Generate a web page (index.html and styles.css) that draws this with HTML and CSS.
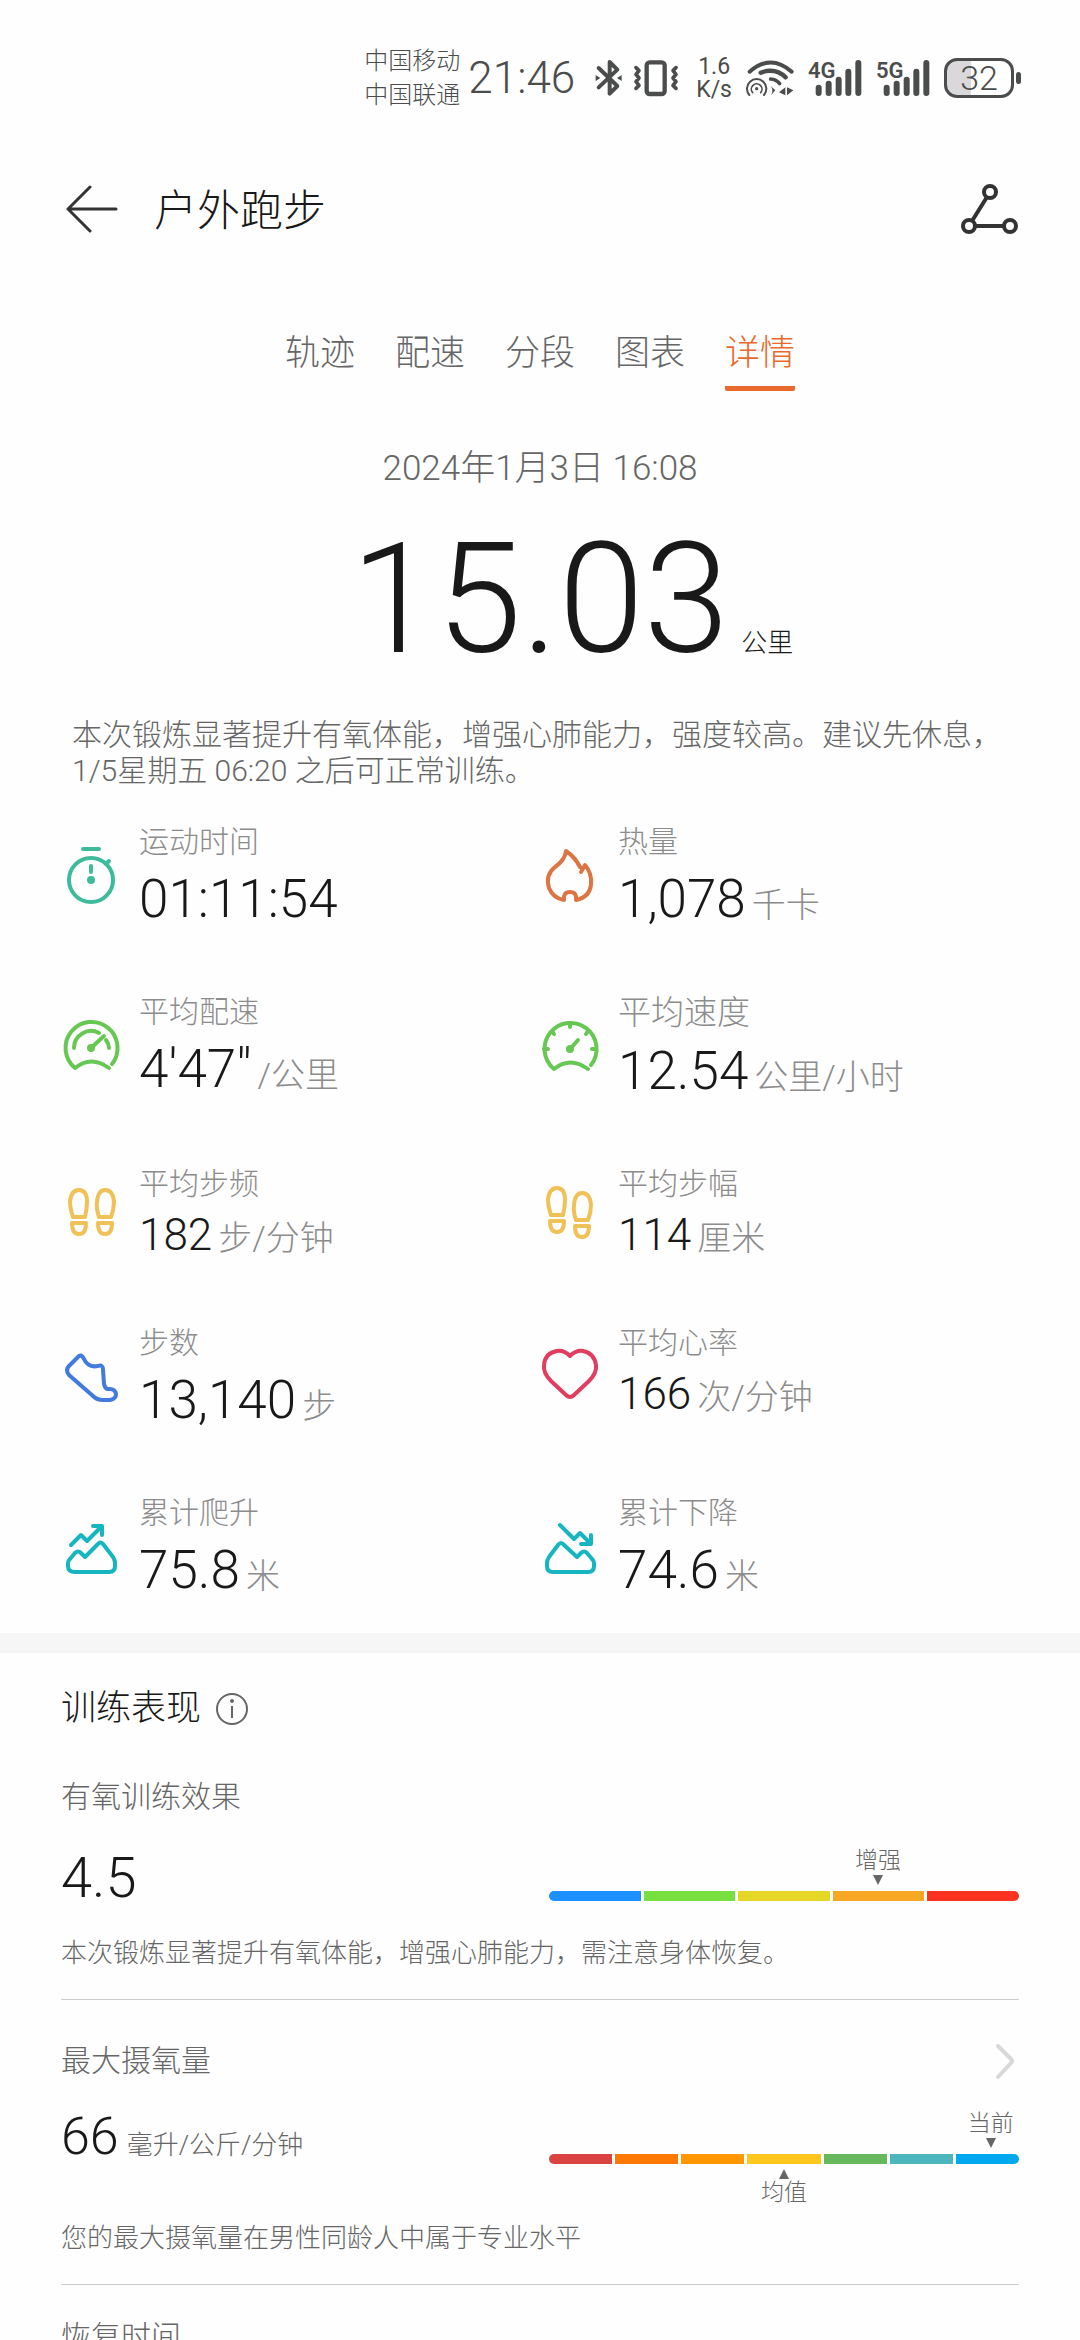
FILE: index.html
```html
<!DOCTYPE html>
<html lang="zh-CN">
<head>
  <meta charset="UTF-8" />
  <meta name="viewport" content="width=device-width, initial-scale=1.0"/>
  <title>户外跑步</title>
  <link rel="stylesheet" href="styles.css">
</head>
<body>
<div class="page">

  <!-- Status bar -->
  <div class="status-bar">
    <div class="carriers"><span>中国移动</span><span>中国联通</span></div>
    <div class="clock">21:46</div>
    <svg class="bluetooth" width="27" height="38" viewBox="753 87 81 114" fill="none" stroke="#4b4d4c" stroke-width="12" stroke-linejoin="round" stroke-linecap="round">
      <path d="M764 114 L820 168 L797 191 V96 L820 119 L764 172"/>
      <path d="M755 135 l14 9 -14 9z M833 135 l-14 9 14 9z" fill="#4b4d4c" stroke="none"/>
    </svg>
    <svg width="46" height="38" viewBox="869 87 138 114" fill="none" stroke="#4b4d4c" stroke-width="13" stroke-linejoin="round" stroke-linecap="round">
      <rect x="910" y="97" width="54" height="95" rx="9"/>
      <path d="M878 113 l9 9 -9 11 9 11 -9 11 9 11 -9 9 M998 113 l-9 9 9 11 -9 11 9 11 -9 11 9 9" stroke-width="11"/>
    </svg>
    <div class="net-speed"><span>1.6</span><span>K/s</span></div>
    <svg class="wifi" width="48" height="38" viewBox="164 87 144 114" fill="none" stroke="#4b4d4c" stroke-width="12" stroke-linecap="round">
      <path d="M175 125 Q238 70 301 125"/>
      <path d="M208 128 Q252 112 283 142" stroke-width="13"/>
      <path d="M238 147 Q255 148 265 161" stroke-width="11"/>
      <path d="M174 195 A29 29 0 1 1 218 195" stroke-width="6"/>
      <path d="M184 188 A16 16 0 1 1 208 188" stroke-width="5"/>
      <circle cx="196" cy="176" r="5" fill="#4b4d4c" stroke="none"/>
      <path d="M238 168 Q248 180 239 196 L252 181z M282 172 v24 l-19 -9z M287 172 v24 l19 -15z" fill="#4b4d4c" stroke="none"/>
    </svg>
    <svg class="signal" width="54" height="38" viewBox="352 87 162 114" stroke="#4b4d4c" stroke-width="18" stroke-linecap="round">
      <text x="352" y="143" class="signal-text">4G</text>
      <path d="M384 173 V189 M414 161 V189 M444 149 V189 M473 125 V189 M503 99 V189"/>
    </svg>
    <svg class="signal" width="54" height="38" viewBox="352 87 162 114" stroke="#4b4d4c" stroke-width="18" stroke-linecap="round">
      <text x="352" y="143" class="signal-text">5G</text>
      <path d="M384 173 V189 M414 161 V189 M444 149 V189 M473 125 V189 M503 99 V189"/>
    </svg>
    <div class="battery">32</div>
  </div>

  <!-- Title bar -->
  <header class="title-bar">
    <button class="icon-button" aria-label="返回">
      <svg width="52" height="50" viewBox="0 0 52 50" fill="none" stroke="#333" stroke-width="3" stroke-linecap="round" stroke-linejoin="round">
        <path d="M50 25 H3 M24 3 L2 25 L24 47"/>
      </svg>
    </button>
    <h1>户外跑步</h1>
    <button class="icon-button" aria-label="轨迹分享">
      <svg width="58" height="52" viewBox="0 0 58 52" fill="none" stroke="#333" stroke-width="4">
        <circle cx="30" cy="9" r="6"/>
        <circle cx="9" cy="43" r="6"/>
        <circle cx="50" cy="43" r="6"/>
        <path d="M27 14 L12 38 M15 43 H44"/>
      </svg>
    </button>
  </header>

  <nav class="tabs">
    <a href="#track">轨迹</a>
    <a href="#pace">配速</a>
    <a href="#split">分段</a>
    <a href="#chart">图表</a>
    <a href="#detail" class="active">详情</a>
  </nav>

  <!-- Summary -->
  <section class="summary">
    <div class="date">2024年1月3日 16:08</div>
    <div class="distance"><span class="distance-value">15.03</span><span class="distance-unit">公里</span></div>
    <p class="advice">本次锻炼显著提升有氧体能，增强心肺能力，强度较高。建议先休息，1/5星期五 06:20 之后可正常训练。</p>
  </section>

  <!-- Metrics -->
  <section class="metrics">
    <div class="metric">
      <svg class="teal" viewBox="0 0 60 60">
        <circle cx="30" cy="31" r="22"/>
        <path d="M22 0 H38 M45 15 L48 12 M30 17 V23"/>
        <circle cx="30" cy="31" r="4" class="solid"/>
      </svg>
      <div class="metric-text">
        <div class="label">运动时间</div>
        <div class="value">01:11:54</div>
      </div>
    </div>
    <div class="metric">
      <svg class="orange" viewBox="0 0 60 60">
        <path d="M40 18 Q35 8 26 2 Q25 11 15 18 Q5 26 9 39 Q13 49 24 51 Q23 43 30 43 Q37 43 36 51 Q50 48 51 35 Q52 24 45 16 L41 23"/>
      </svg>
      <div class="metric-text">
        <div class="label">热量</div>
        <div class="value">1,078<span class="unit">千卡</span></div>
      </div>
    </div>

    <div class="metric">
      <svg class="green" viewBox="0 0 60 60">
        <path d="M51 45 A26 26 0 1 0 14 49 Q30 36 48 49"/>
        <path d="M13 29 A17 17 0 0 1 38 14 M45 21 Q48 25 48 29 M31 28 L43 17"/>
        <circle cx="30" cy="29" r="4" class="solid"/>
      </svg>
      <div class="metric-text">
        <div class="label">平均配速</div>
        <div class="value">4'47"<span class="unit">/公里</span></div>
      </div>
    </div>
    <div class="metric">
      <svg class="green" viewBox="0 0 60 60">
        <path d="M51 45 A26 26 0 1 0 14 49 Q30 36 48 49"/>
        <path d="M30 3 V7 M12 11 L14 14 M48 11 L46 14 M4 29 H8 M52 29 H56 M31 28 L38 20"/>
        <circle cx="30" cy="29" r="4" class="solid"/>
      </svg>
      <div class="metric-text">
        <div class="label label-large">平均速度</div>
        <div class="value">12.54<span class="unit">公里/小时</span></div>
      </div>
    </div>

    <div class="metric">
      <svg class="yellow" viewBox="0 0 60 60">
        <path d="M12 31 Q9 22 9 16 Q10 4 18 4 Q26 4 26 16 Q26 23 24 31z M11 37 H25 Q25 48 18 48 Q11 48 11 37z"/>
        <path d="M38 31 Q35 22 36 16 Q37 4 44 4 Q52 4 53 16 Q53 23 50 31z M37 37 H51 Q51 48 44 48 Q37 48 37 37z"/>
      </svg>
      <div class="metric-text">
        <div class="label">平均步频</div>
        <div class="value value-small">182<span class="unit">步/分钟</span></div>
      </div>
    </div>
    <div class="metric">
      <svg class="yellow" viewBox="0 0 60 60">
        <path d="M11 29 Q8 20 8 14 Q9 2 17 2 Q25 2 25 14 Q25 21 23 29z M10 35 H24 Q24 46 17 46 Q10 46 10 35z"/>
        <path d="M36 34 Q33 25 34 19 Q35 7 42 7 Q50 7 51 19 Q51 26 48 34z M35 40 H49 Q49 51 42 51 Q35 51 35 40z"/>
      </svg>
      <div class="metric-text">
        <div class="label">平均步幅</div>
        <div class="value value-small">114<span class="unit">厘米</span></div>
      </div>
    </div>

    <div class="metric">
      <svg class="blue" viewBox="0 0 60 60">
        <path d="M17 7 L8 16 Q4 20 8 25 L32 46 Q36 50 42 50 H49 Q55 49 55 44 Q54 39 49 39 H47 Q44 39 43 34 L42 20 Q42 14 37 16 Q27 18 23 9 Q20 3 17 7z"/>
      </svg>
      <div class="metric-text">
        <div class="label">步数</div>
        <div class="value">13,140<span class="unit">步</span></div>
      </div>
    </div>
    <div class="metric">
      <svg class="red" viewBox="0 0 60 60">
        <path d="M30 11 Q24 5 17 6 Q5 8 4 20 Q3 28 11 36 L26 50 Q30 54 34 50 L49 36 Q57 28 56 20 Q54 8 43 6 Q36 5 30 11z"/>
      </svg>
      <div class="metric-text">
        <div class="label">平均心率</div>
        <div class="value value-small">166<span class="unit">次/分钟</span></div>
      </div>
    </div>

    <div class="metric">
      <svg class="cyan" viewBox="0 0 60 60">
        <path d="M10 25 L20 15 L26 21 L40 7 M32 6 H41 V15"/>
        <path d="M7 43 Q7 41 9 39 L14 33 Q17 30 20 33 L24 37 L37 24 Q39 21 42 24 L52 37 Q54 40 54 43 V46 Q54 52 48 52 H14 Q7 52 7 46z"/>
      </svg>
      <div class="metric-text">
        <div class="label">累计爬升</div>
        <div class="value">75.8<span class="unit">米</span></div>
      </div>
    </div>
    <div class="metric">
      <svg class="cyan" viewBox="0 0 60 60">
        <path d="M20 5 L34 19 L40 13 L50 23 M41 24 H51 V15"/>
        <path d="M54 43 Q54 41 52 39 L47 33 Q44 30 41 33 L37 37 L24 25 Q21 21 18 25 L9 37 Q7 40 7 43 V46 Q7 52 13 52 H48 Q54 52 54 46z"/>
      </svg>
      <div class="metric-text">
        <div class="label">累计下降</div>
        <div class="value">74.6<span class="unit">米</span></div>
      </div>
    </div>
  </section>

  <!-- Training performance -->
  <section class="training">
    <h2>训练表现
      <svg width="34" height="34" viewBox="0 0 34 34" fill="none" stroke="#666" stroke-width="2">
        <circle cx="17" cy="17" r="15"/>
        <path d="M17 14 V26"/>
        <circle cx="17" cy="9" r="1" fill="#666"/>
      </svg>
    </h2>

    <div class="block">
      <h3>有氧训练效果</h3>
      <div class="block-row">
        <div class="score">4.5</div>
        <div class="scale">
          <div class="marker" style="left: 70%"><span>增强</span><i class="down"></i></div>
          <div class="scale-bar">
            <span class="effect-1"></span>
            <span class="effect-2"></span>
            <span class="effect-3"></span>
            <span class="effect-4"></span>
            <span class="effect-5"></span>
          </div>
        </div>
      </div>
      <p>本次锻炼显著提升有氧体能，增强心肺能力，需注意身体恢复。</p>
    </div>

    <div class="block">
      <div class="block-head">
        <h3>最大摄氧量</h3>
        <button class="icon-button" aria-label="查看最大摄氧量">
          <svg width="30" height="40" viewBox="0 0 30 40" fill="none" stroke="#d8d8d8" stroke-width="4" stroke-linecap="round" stroke-linejoin="round">
            <path d="M9 5 L22 18 Q24 20 22 22 L9 36"/>
          </svg>
        </button>
      </div>
      <div class="block-row">
        <div class="score score-small">66<span>毫升/公斤/分钟</span></div>
        <div class="scale scale-double">
          <div class="marker" style="left: 94%"><span>当前</span><i class="down"></i></div>
          <div class="scale-bar">
            <span class="vo2-1"></span>
            <span class="vo2-2"></span>
            <span class="vo2-3"></span>
            <span class="vo2-4"></span>
            <span class="vo2-5"></span>
            <span class="vo2-6"></span>
            <span class="vo2-7"></span>
          </div>
          <div class="marker marker-below" style="left: 50%"><i class="up"></i><span>均值</span></div>
        </div>
      </div>
      <p>您的最大摄氧量在男性同龄人中属于专业水平</p>
    </div>

    <div class="block">
      <h3>恢复时间</h3>
    </div>
  </section>

</div>
</body>
</html>
```
FILE: styles.css
```css
* {
  box-sizing: border-box;
}

body {
  margin: 0;
  font-family: Roboto, "Noto Sans CJK SC", sans-serif;
  font-weight: 300;
  color: #191919;
  background: #fefefe;
}

h1, h2, h3, p {
  margin: 0;
  font-weight: 300;
}

.page {
  height: 100vh;
  overflow: hidden;
}

.icon-button {
  display: flex;
  padding: 0;
  border: none;
  background: none;
  cursor: pointer;
}

/* status bar */
.status-bar {
  display: flex;
  align-items: center;
  justify-content: flex-end;
  gap: 14px;
  height: 117px;
  padding: 39px 59px 0 0;
  color: #4b4d4c;
}

.carriers {
  display: flex;
  flex-direction: column;
  font-size: 24px;
  line-height: 34px;
}

.clock {
  margin: 0 6px 0 -6px;
  font-size: 44px;
}

.bluetooth {
  margin-right: -3px;
}

.net-speed {
  display: flex;
  flex-direction: column;
  align-items: center;
  margin-left: 3px;
  font-size: 23px;
  font-weight: 400;
  line-height: 23px;
}

.signal-text {
  font-size: 66px;
  font-weight: 600;
  fill: #4b4d4c;
  stroke: none;
}

.battery {
  position: relative;
  width: 70px;
  height: 40px;
  margin-right: 7px;
  border: 3px solid #4b4d4c;
  border-radius: 13px;
  background: linear-gradient(to right, #dad8da 38%, transparent 38%);
  font-size: 34px;
  line-height: 35px;
  text-align: center;
}

.battery::after {
  content: "";
  position: absolute;
  top: 11px;
  right: -10px;
  width: 5px;
  height: 12px;
  border-radius: 3px;
  background: #4b4d4c;
}

/* title bar */
.title-bar {
  display: flex;
  align-items: center;
  height: 184px;
  padding: 0 62px 0 66px;
}

.title-bar h1 {
  flex: 1;
  margin-left: 36px;
  padding-bottom: 4px;
  font-size: 43px;
}

/* tabs */
.tabs {
  display: flex;
  justify-content: center;
  gap: 40px;
  margin-top: 27px;
}

.tabs a {
  padding-bottom: 11px;
  font-size: 35px;
  line-height: 52px;
  color: #666;
  text-decoration: none;
}

.tabs .active {
  padding-bottom: 6px;
  border-bottom: 5px solid #e9692c;
  border-radius: 2px;
  color: #e9692c;
}

/* summary */
.summary {
  padding: 0 72px;
  margin-top: 54px;
}

.date {
  font-size: 35px;
  line-height: 48px;
  text-align: center;
  color: #666;
}

.distance {
  display: grid;
  grid-template-columns: 1fr auto 1fr;
  align-items: baseline;
  margin-top: 27px;
  line-height: 160px;
}

.distance-value {
  grid-column: 2;
  font-size: 154px;
}

.distance-unit {
  margin-left: 12px;
  font-size: 26px;
  line-height: 40px;
}

.advice {
  margin-top: 37px;
  font-size: 30px;
  line-height: 36px;
  color: #666;
}

/* metrics */
.metrics {
  display: grid;
  grid-template-columns: 1fr 1fr;
  align-items: start;
  row-gap: 56px;
  padding: 33px 61px 26px;
}

.metric {
  display: flex;
  align-items: center;
  gap: 18px;
}

.metric svg {
  width: 60px;
  height: 60px;
  overflow: visible;
  fill: none;
  stroke: currentColor;
  stroke-width: 4;
  stroke-linecap: round;
  stroke-linejoin: round;
}

.metric .solid {
  fill: currentColor;
  stroke: none;
}

.label {
  font-size: 30px;
  line-height: 40px;
  color: #8c8c8c;
}

.label-large {
  font-size: 33px;
  line-height: 42px;
}

.value {
  font-size: 53px;
  line-height: 74px;
}

.value-small {
  font-size: 44px;
  line-height: 63px;
}

.unit {
  margin-left: 6px;
  font-size: 34px;
  line-height: 40px;
  color: #8c8c8c;
}

.teal { color: #3dbb9a; }
.orange { color: #dd7444; }
.green { color: #67c753; }
.yellow { color: #efc157; }
.blue { color: #427bdd; }
.red { color: #e23d5e; }
.cyan { color: #16b5bf; }

/* training performance */
.training {
  padding: 29px 61px 0;
  border-top: 20px solid #f6f6f6;
}

.training h2 {
  display: flex;
  align-items: center;
  gap: 14px;
  font-size: 35px;
  line-height: 54px;
}

.block {
  padding: 41px 0 29px;
  border-bottom: 1px solid #ccc;
}

.block + .block {
  padding-top: 32px;
}

.block h3 {
  font-size: 30px;
  line-height: 40px;
  color: #666;
}

.block-head {
  display: flex;
  align-items: center;
  justify-content: space-between;
  height: 58px;
}

.block-row {
  display: grid;
  grid-template-columns: 1fr 470px;
  align-items: start;
  margin-top: 16px;
}

.score {
  font-size: 56px;
  line-height: 90px;
}

.score-small {
  font-size: 52px;
  line-height: 62px;
}

.score span {
  margin-left: 8px;
  font-size: 26px;
  color: #666;
}

.scale {
  position: relative;
  padding-top: 58px;
}

.scale-double {
  padding: 48px 0 44px;
}

.scale-bar {
  display: flex;
  gap: 3px;
  height: 10px;
  border-radius: 5px;
  overflow: hidden;
}

.scale-bar span {
  flex: 1;
}

.effect-1 { background: #1e90ff; }
.effect-2 { background: #77e03e; }
.effect-3 { background: #e6d626; }
.effect-4 { background: #f5a623; }
.effect-5 { background: #fd3322; }

.vo2-1 { background: #db4343; }
.vo2-2 { background: #ff7800; }
.vo2-3 { background: #ff9800; }
.scale-bar .vo2-4 { flex: 1.16; background: #ffc61c; }
.vo2-5 { background: #65b85c; }
.vo2-6 { background: #4bb7bc; }
.vo2-7 { background: #00a8f0; }

.marker {
  position: absolute;
  bottom: 16px;
  display: flex;
  flex-direction: column;
  align-items: center;
  transform: translateX(-50%);
  font-size: 23px;
  line-height: 28px;
  white-space: nowrap;
  color: #666;
}

.scale-double .marker {
  bottom: 60px;
}

.scale-double .marker-below {
  bottom: 1px;
}

.marker i {
  border: 5px solid transparent;
}

.marker .down {
  border-top: 10px solid #666;
  border-bottom: none;
}

.marker .up {
  border-bottom: 10px solid #666;
  border-top: none;
}

.block p {
  margin-top: 13px;
  font-size: 26px;
  line-height: 34px;
  color: #666;
}
```
